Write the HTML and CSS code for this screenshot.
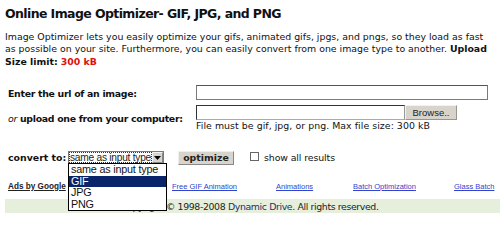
FILE: index.html
```html
<!DOCTYPE html>
<html>
<head>
<meta charset="utf-8">
<link rel="stylesheet" href="styles.css">
</head>
<body>
<div class="page">
  <h1 class="title">Online Image Optimizer- GIF, JPG, and PNG</h1>
  <p class="intro">Image Optimizer lets you easily optimize your gifs, animated gifs, jpgs, and pngs, so they load as fast as possible on your site. Furthermore, you can easily convert from one image type to another. <b>Upload Size limit:</b> <b class="red">300 kB</b></p>

  <div class="form">
    <div class="label row1">Enter the url of an image:</div>
    <div class="field row1"><div class="textbox url"></div></div>

    <div class="label row2"><i>or</i> upload one from your computer:</div>
    <div class="field row2">
      <div class="filerow"><div class="textbox file"></div><div class="btn browse">Browse..</div></div>
      <div class="hint">File must be gif, jpg, or png. Max file size: 300 kB</div>
    </div>
  </div>

  <div class="convert">
    <span class="clabel">convert to:</span>
    <div class="select">
      <span class="selval">same as input type</span>
      <span class="arrow"><svg width="7" height="4" viewBox="0 0 7 4"><path d="M0 0h7L3.5 4z" fill="#000"/></svg></span>
      <ul class="options">
        <li>same as input type</li>
        <li class="sel">GIF</li>
        <li>JPG</li>
        <li>PNG</li>
      </ul>
    </div>
    <div class="btn optimize">optimize</div>
    <span class="check"></span>
    <span class="showall">show all results</span>
  </div>

  <div class="links">
    <a class="ads">Ads by Google</a>
    <a class="lk l1">Free GIF Animation</a>
    <a class="lk l2">Animations</a>
    <a class="lk l3">Batch Optimization</a>
    <a class="lk l4">Glass Batch</a>
  </div>

  <div class="footer">Copyright © 1998-2008 <span class="dd">Dynamic Drive</span>. All rights reserved.</div>
</div>
</body>
</html>
```

FILE: styles.css
```css
html, body {
  margin: 0;
  padding: 0;
  background: #fff;
}
body {
  font-family: "DejaVu Sans", Verdana, sans-serif;
  color: #111;
  width: 500px;
  height: 228px;
  overflow: hidden;
}
.page {
  padding: 6px 0 0 5px;
}
.title {
  font-size: 12.5px;
  font-weight: bold;
  margin: 0;
  line-height: 15px;
  letter-spacing: -0.6px;
}
.intro {
  font-size: 9.4px;
  line-height: 12.3px;
  margin: 10px 0 0 0;
  width: 488px;
  letter-spacing: 0;
}
.intro b { font-weight: bold; }
.red { color: #e01010; }

.form {
  display: grid;
  grid-template-columns: 188px 1fr;
  margin-top: 17px;
  padding-left: 3px;
  row-gap: 5px;
}
.label {
  font-size: 9.4px;
  font-weight: bold;
  letter-spacing: -0.3px;
}
.label i { font-weight: normal; }
.row1.label { padding-top: 3px; }
.row2.label { padding-top: 8px; }
.textbox {
  box-sizing: border-box;
  border: 1px solid #7a7a7a;
  border-top-color: #555;
  background: #fff;
  height: 15px;
}
.url { width: 292px; }
.filerow { display: flex; }
.file { width: 209px; border: 1px solid #333; border-right-color: #999; border-bottom-color: #aaa; }
.btn {
  box-sizing: border-box;
  background: #d8d4cc;
  border: 1px solid #9a968e;
  border-top-color: #f4f2ee;
  border-left-color: #f4f2ee;
  font-family: "Liberation Sans", Arial, sans-serif;
  font-size: 9.5px;
  color: #222;
  text-align: center;
}
.browse { width: 52px; height: 15px; line-height: 13px; }
.hint {
  font-size: 9.4px;
  letter-spacing: 0.05px;
  line-height: 11px;
}

.convert {
  display: flex;
  align-items: center;
  margin-top: 20px;
  padding-left: 3px;
  height: 14px;
}
.clabel {
  font-size: 9.4px;
  font-weight: bold;
  width: 60px;
}
.select {
  position: relative;
  box-sizing: border-box;
  width: 96px;
  height: 13px;
  border: 1px solid #7a7a7a;
  display: flex;
  font-family: "Liberation Sans", Arial, sans-serif;
  font-size: 10.2px;
}
.selval {
  flex: 1;
  line-height: 11px;
  padding-left: 1px;
  letter-spacing: -0.25px;
  outline: 1px dotted #333;
  outline-offset: -1px;
  color: #222;
  white-space: nowrap;
  overflow: hidden;
}
.arrow {
  width: 11px;
  box-sizing: border-box;
  background: #d8d4cc;
  border: 1px solid #888;
  border-top-color: #f4f2ee;
  border-left-color: #f4f2ee;
  display: flex;
  align-items: center;
  justify-content: center;
}
.options {
  position: absolute;
  left: -1px;
  top: 11px;
  width: 99px;
  margin: 0;
  padding: 0;
  list-style: none;
  background: #fff;
  border: 1px solid #000;
  z-index: 5;
  box-sizing: border-box;
}
.options li {
  height: 11.5px;
  line-height: 11.5px;
  padding-left: 2px;
  font-size: 10.8px;
  color: #111;
  letter-spacing: -0.2px;
  white-space: nowrap;
}
.options li.sel {
  background: #0a246a;
  color: #fff;
}
.optimize {
  margin-left: 14px;
  width: 56px;
  height: 14px;
  line-height: 12px;
  font-family: "DejaVu Sans", Verdana, sans-serif;
  font-weight: bold;
  font-size: 9.4px;
  border-color: #888;
  border-top-color: #eee;
  border-left-color: #eee;
}
.check {
  box-sizing: border-box;
  width: 9px;
  height: 9px;
  border: 1px solid #666;
  margin-left: 16px;
  margin-top: -3px;
}
.showall {
  font-size: 9.4px;
  margin-left: 5px;
  letter-spacing: -0.1px;
}

.links {
  display: flex;
  align-items: baseline;
  margin-top: 17px;
  padding-left: 3px;
  height: 12px;
  font-family: "Liberation Sans", Arial, sans-serif;
}
.links a { text-decoration: underline; white-space: nowrap; }
.ads {
  font-size: 8.2px;
  font-weight: bold;
  color: #222;
  width: 164px;
}
.lk {
  color: #3344cc;
  font-size: 7.5px;
}
.l1 { width: 104px; }
.l2 { width: 77px; }
.l3 { width: 101px; }

.footer {
  margin-top: 5px;
  height: 14px;
  background: #e6efdc;
  line-height: 15px;
  font-size: 9.4px;
  padding-left: 116px;
  letter-spacing: -0.38px;
  color: #222;
}
.dd { color: #1f2c70; }
```
